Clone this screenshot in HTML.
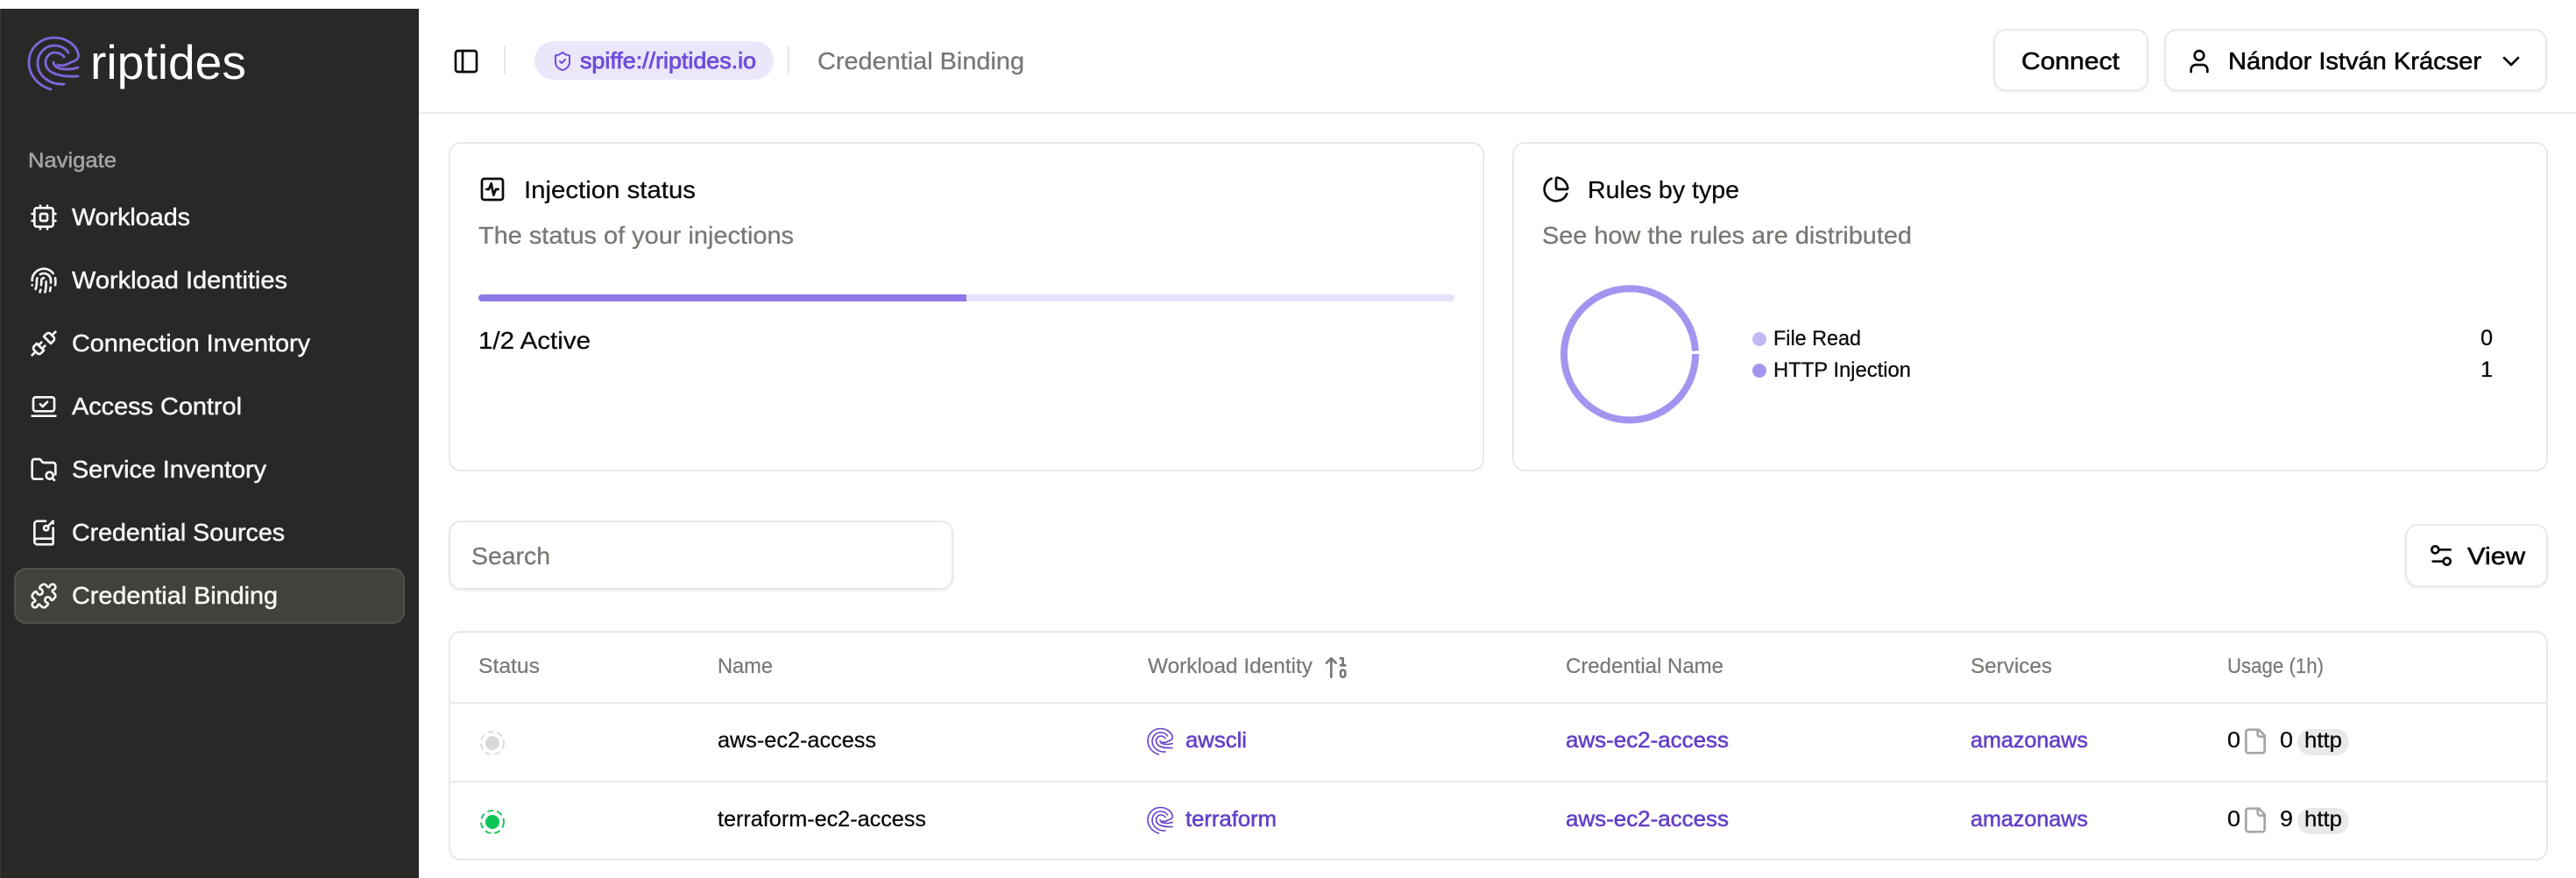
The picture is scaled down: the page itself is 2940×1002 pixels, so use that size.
<!DOCTYPE html>
<html lang="en">
<head>
<meta charset="utf-8">
<title>Credential Binding - riptides</title>
<style>
html,body{margin:0;padding:0;width:2940px;height:1002px;overflow:hidden;background:#fff}
body{position:relative;font-family:"Liberation Sans",sans-serif}
.box{position:absolute;box-sizing:border-box;background:#fff;border:2px solid #e8e8e7;border-radius:14px}
.btn{box-shadow:0 2px 3px rgba(0,0,0,.06)}
.side{position:absolute;left:0;top:10px;width:478px;height:992px;background:#292827;box-sizing:border-box;border-left:1px solid #3a3938}
.active{position:absolute;left:16px;top:648px;width:446px;height:64px;box-sizing:border-box;background:#42413c;border:2px solid #53514c;border-radius:14px}
.hline{position:absolute;height:2px;background:#e8e8e7}
.pill{position:absolute;background:#e9e9e7;border-radius:15px}
#o{position:absolute;left:0;top:0}
text{font-family:"Liberation Sans",sans-serif;white-space:pre}
.nav{font-size:28px;fill:#f6f6f4;stroke:#f6f6f4;stroke-width:.5px}
.ic{fill:none;stroke-width:2;stroke-linecap:round;stroke-linejoin:round}
.d{font-size:28px;fill:#0a0a0a;stroke:#0a0a0a;stroke-width:.25px}
.m{font-size:28px;fill:#0a0a0a;stroke:#0a0a0a;stroke-width:.6px}
.g{font-size:28px;fill:#7a7873;stroke:#7a7873;stroke-width:.3px}
.h{font-size:24px;fill:#7a7873;stroke:#7a7873;stroke-width:.2px}
.c{font-size:25px;fill:#0a0a0a;stroke:#0a0a0a;stroke-width:.25px}
.l{font-size:25px;fill:#6440c8;stroke:#6440c8;stroke-width:.55px}
</style>
</head>
<body>
<div class="side"></div>
<div class="active"></div>
<div class="hline" style="left:478px;top:128px;width:2462px"></div>
<div class="box btn" style="left:2275px;top:33px;width:177px;height:71px"></div>
<div class="box btn" style="left:2470px;top:33px;width:437px;height:71px"></div>
<div class="box" style="left:512px;top:162px;width:1182px;height:376px"></div>
<div class="box" style="left:1726px;top:162px;width:1182px;height:376px"></div>
<div class="box btn" style="left:512px;top:594px;width:576px;height:79px"></div>
<div class="box btn" style="left:2745px;top:598px;width:163px;height:72px"></div>
<div class="box" style="left:512px;top:720px;width:2396px;height:262px"></div>
<div class="hline" style="left:513px;top:801px;width:2394px"></div>
<div class="hline" style="left:513px;top:891px;width:2394px"></div>
<div class="pill" style="left:2622px;top:832px;width:59px;height:30px"></div>
<div class="pill" style="left:2622px;top:922px;width:59px;height:30px"></div>

<svg id="o" width="2940" height="1002" viewBox="0 0 2940 1002" xmlns="http://www.w3.org/2000/svg">
<defs>
<g id="logo" fill="none" stroke-linecap="round" stroke-linejoin="round">
<path d="M25 60C9 55 0 43 0 29C0 13 13 1 29 1C44 1 56 11 56.500 22C56.500 27 50 28 46 30C42 32 39 34 33 32"/>
<path d="M40 54C23 55 10 44 10 30C10 18 19 10 29 10C36 10 42 13 45 18"/>
<path d="M56 45C39 46 19 43 19 29C19 23 24 18 29 18C34 18 38 20 40 23"/>
<path d="M56 35C47 38 39 37 35 36C31 35 28 32 28 29"/>
</g>
</defs>

<!-- brand -->
<use href="#logo" x="33" y="42" stroke="#7f65d9" stroke-width="2.800"/>
<text x="103" y="90" font-size="55" fill="#fff" textLength="178" lengthAdjust="spacingAndGlyphs">riptides</text>
<text x="32" y="191" font-size="24" fill="#a3a29e" stroke="#a3a29e" stroke-width=".55" textLength="101" lengthAdjust="spacingAndGlyphs">Navigate</text>

<!-- nav labels -->
<text class="nav" x="82" y="257" textLength="135" lengthAdjust="spacingAndGlyphs">Workloads</text>
<text class="nav" x="82" y="329" textLength="246" lengthAdjust="spacingAndGlyphs">Workload Identities</text>
<text class="nav" x="82" y="401" textLength="272" lengthAdjust="spacingAndGlyphs">Connection Inventory</text>
<text class="nav" x="82" y="473" textLength="194" lengthAdjust="spacingAndGlyphs">Access Control</text>
<text class="nav" x="82" y="545" textLength="222" lengthAdjust="spacingAndGlyphs">Service Inventory</text>
<text class="nav" x="82" y="617" textLength="243" lengthAdjust="spacingAndGlyphs">Credential Sources</text>
<text class="nav" x="82" y="689" textLength="235" lengthAdjust="spacingAndGlyphs">Credential Binding</text>

<!-- nav icons -->
<g class="ic" stroke="#f6f6f4">
<g transform="translate(34 232) scale(1.333)"><rect x="4" y="4" width="16" height="16" rx="2"/><rect x="9" y="9" width="6" height="6" rx="1"/><path d="M15 2v2M15 20v2M2 15h2M2 9h2M20 15h2M20 9h2M9 2v2M9 20v2"/></g>
<g transform="translate(34 304) scale(1.333)"><path d="M12 10a2 2 0 0 0-2 2c0 1.020-.1 2.510-.26 4"/><path d="M14 13.120c0 2.380 0 6.380-1 8.880"/><path d="M17.290 21.020c.12-.6.43-2.300.5-3.020"/><path d="M2 12a10 10 0 0 1 18-6"/><path d="M2 16h.01"/><path d="M21.800 16c.2-2 .131-5.354 0-6"/><path d="M5 19.500C5.500 18 6 15 6 12a6 6 0 0 1 .34-2"/><path d="M8.650 22c.21-.66.45-1.320.57-2"/><path d="M9 6.800a6 6 0 0 1 9 5.200v2"/></g>
<g transform="translate(34 376) scale(1.333)"><path d="m19 5 3-3"/><path d="m2 22 3-3"/><path d="M6.300 20.300a2.400 2.400 0 0 0 3.400 0L12 18l-6-6-2.300 2.300a2.400 2.400 0 0 0 0 3.400Z"/><path d="M7.500 13.500 10 11"/><path d="M10.500 16.500 13 14"/><path d="m12 6 6 6 2.300-2.300a2.400 2.400 0 0 0 0-3.400l-2.600-2.600a2.400 2.400 0 0 0-3.400 0Z"/></g>
<g transform="translate(34 448) scale(1.333)"><path d="M2 20h20"/><path d="m9 10 2 2 4-4"/><rect x="3" y="4" width="18" height="12" rx="2"/></g>
<g transform="translate(34 520) scale(1.333)"><path d="M10.700 20H4a2 2 0 0 1-2-2V5a2 2 0 0 1 2-2h3.900a2 2 0 0 1 1.690.9l.81 1.200a2 2 0 0 0 1.670.9H20a2 2 0 0 1 2 2v8"/><circle cx="17" cy="17" r="3"/><path d="m21 21-1.900-1.900"/></g>
<g transform="translate(34 592) scale(1.333)"><path d="m19 3 1 1"/><path d="m20 2-4.500 4.500"/><path d="M20 7.898V21a1 1 0 0 1-1 1H6.500a1 1 0 0 1 0-5H20"/><path d="M4 19.500v-15A2.500 2.500 0 0 1 6.500 2h7"/><circle cx="14" cy="8" r="2"/></g>
<g transform="translate(34 664) scale(1.333)"><path d="M15.390 4.390a1 1 0 0 0 1.680-.474 2.500 2.500 0 1 1 3.014 3.015 1 1 0 0 0-.474 1.680l1.683 1.682a2.414 2.414 0 0 1 0 3.414L19.610 15.390a1 1 0 0 1-1.680-.474 2.500 2.500 0 1 0-3.014 3.015 1 1 0 0 1 .474 1.680l-1.683 1.682a2.414 2.414 0 0 1-3.414 0L8.610 19.610a1 1 0 0 0-1.680.474 2.500 2.500 0 1 1-3.014-3.015 1 1 0 0 0 .474-1.680l-1.683-1.682a2.414 2.414 0 0 1 0-3.414L4.390 8.610a1 1 0 0 1 1.680.474 2.500 2.500 0 1 0 3.014-3.015 1 1 0 0 1-.474-1.680l1.683-1.682a2.414 2.414 0 0 1 3.414 0z"/></g>
</g>

<!-- header -->
<g class="ic" stroke="#0a0a0a" transform="translate(516 54) scale(1.333)"><rect width="18" height="18" x="3" y="3" rx="2"/><path d="M9 3v18"/></g>
<rect x="575" y="53" width="2" height="32" fill="#e6e6e5"/>
<rect x="610" y="47" width="273" height="44" rx="22" fill="#ebe7fb"/>
<g class="ic" stroke="#6f4edb" transform="translate(630 58)"><path d="M20 13c0 5-3.500 7.500-7.660 8.950a1 1 0 0 1-.67-.01C7.500 20.500 4 18 4 13V6a1 1 0 0 1 1-1c2 0 4.500-1.200 6.240-2.720a1.170 1.170 0 0 1 1.520 0C14.510 3.810 17 5 19 5a1 1 0 0 1 1 1z"/><path d="m9 12 2 2 4-4"/></g>
<text x="662" y="78" font-size="26" fill="#6f4edb" stroke="#6f4edb" stroke-width=".85" textLength="201" lengthAdjust="spacingAndGlyphs">spiffe://riptides.io</text>
<rect x="899" y="53" width="2" height="32" fill="#e6e6e5"/>
<text class="g" x="933" y="79" textLength="236" lengthAdjust="spacingAndGlyphs">Credential Binding</text>
<text class="m" x="2307" y="79" textLength="112" lengthAdjust="spacingAndGlyphs">Connect</text>
<g class="ic" stroke="#0a0a0a" transform="translate(2494 54) scale(1.333)"><path d="M19 21v-2a4 4 0 0 0-4-4H9a4 4 0 0 0-4 4v2"/><circle cx="12" cy="7" r="4"/></g>
<text class="m" x="2543" y="79" textLength="289" lengthAdjust="spacingAndGlyphs">Nándor István Krácser</text>
<g class="ic" stroke="#0a0a0a" transform="translate(2850 54) scale(1.333)"><path d="m6 9 6 6 6-6"/></g>

<!-- injection card -->
<g class="ic" stroke="#0a0a0a" transform="translate(546 200) scale(1.333)"><rect width="18" height="18" x="3" y="3" rx="2"/><path d="M17 12h-2l-2 5-2-10-2 5H7"/></g>
<text class="d" x="598" y="226" textLength="196" lengthAdjust="spacingAndGlyphs">Injection status</text>
<text class="g" x="546" y="278" textLength="360" lengthAdjust="spacingAndGlyphs">The status of your injections</text>
<rect x="546" y="336" width="1114" height="8" rx="4" fill="#e7e2fb"/>
<path d="M550 336H1103V344H550a4 4 0 0 1 0-8Z" fill="#8e78e8"/>
<text class="d" x="546" y="398" textLength="128" lengthAdjust="spacingAndGlyphs">1/2 Active</text>

<!-- rules card -->
<g class="ic" stroke="#0a0a0a" transform="translate(1760 200) scale(1.333)"><path d="M21 12c.552 0 1.005-.449.95-.998a10 10 0 0 0-8.953-8.951c-.55-.055-.998.398-.998.95v8a1 1 0 0 0 1 1z"/><path d="M21.210 15.890A10 10 0 1 1 8 2.830"/></g>
<text class="d" x="1812" y="226" textLength="173" lengthAdjust="spacingAndGlyphs">Rules by type</text>
<text class="g" x="1760" y="278" textLength="422" lengthAdjust="spacingAndGlyphs">See how the rules are distributed</text>
<path d="M1935 404A75 75 0 1 1 1934.900 400.500" fill="none" stroke="#a594ef" stroke-width="8"/>
<circle cx="2008" cy="387" r="8" fill="#c4b8f4"/>
<circle cx="2008" cy="423" r="8" fill="#a594ef"/>
<text x="2024" y="394" font-size="24" fill="#0a0a0a" stroke="#0a0a0a" stroke-width=".25" textLength="100" lengthAdjust="spacingAndGlyphs">File Read</text>
<text x="2024" y="430" font-size="24" fill="#0a0a0a" stroke="#0a0a0a" stroke-width=".25" textLength="157" lengthAdjust="spacingAndGlyphs">HTTP Injection</text>
<text x="2845" y="394" font-size="25" fill="#0a0a0a" stroke="#0a0a0a" stroke-width=".3" text-anchor="end">0</text>
<text x="2845" y="430" font-size="25" fill="#0a0a0a" stroke="#0a0a0a" stroke-width=".3" text-anchor="end">1</text>

<!-- toolbar -->
<text class="g" x="538" y="644" textLength="90" lengthAdjust="spacingAndGlyphs">Search</text>
<g class="ic" stroke="#0a0a0a" transform="translate(2770 618) scale(1.333)"><path d="M20 7h-9"/><path d="M14 17H5"/><circle cx="17" cy="17" r="3"/><circle cx="7" cy="7" r="3"/></g>
<text class="m" x="2816" y="644" textLength="66" lengthAdjust="spacingAndGlyphs">View</text>

<!-- table header -->
<text class="h" x="546" y="768" textLength="70" lengthAdjust="spacingAndGlyphs">Status</text>
<text class="h" x="819" y="768" textLength="63" lengthAdjust="spacingAndGlyphs">Name</text>
<text class="h" x="1310" y="768" textLength="188" lengthAdjust="spacingAndGlyphs">Workload Identity</text>
<g class="ic" stroke="#7a7873" transform="translate(1510 746) scale(1.333)"><path d="m3 8 4-4 4 4"/><path d="M7 4v16"/><path d="M17 10V4h-2"/><path d="M15 10h4"/><rect x="15" y="14" width="4" height="6" ry="2"/></g>
<text class="h" x="1787" y="768" textLength="180" lengthAdjust="spacingAndGlyphs">Credential Name</text>
<text class="h" x="2249" y="768" textLength="93" lengthAdjust="spacingAndGlyphs">Services</text>
<text class="h" x="2542" y="768" textLength="110" lengthAdjust="spacingAndGlyphs">Usage (1h)</text>

<!-- row 1 -->
<circle cx="562" cy="848" r="13" fill="none" stroke="#d9d9d8" stroke-width="1.800" stroke-dasharray="7 4"/>
<circle cx="562" cy="848" r="8" fill="#d9d9d8"/>
<text class="c" x="819" y="853" textLength="181" lengthAdjust="spacingAndGlyphs">aws-ec2-access</text>
<use href="#logo" transform="translate(1310 831) scale(.5)" stroke="#6440c8" stroke-width="3.200"/>
<text class="l" x="1353" y="853" textLength="70" lengthAdjust="spacingAndGlyphs">awscli</text>
<text class="l" x="1787" y="853" textLength="186" lengthAdjust="spacingAndGlyphs">aws-ec2-access</text>
<text class="l" x="2249" y="853" textLength="134" lengthAdjust="spacingAndGlyphs">amazonaws</text>
<text class="c" x="2542" y="853" textLength="15" lengthAdjust="spacingAndGlyphs">0</text>
<g class="ic" stroke="#a6a6a4" transform="translate(2558 830) scale(1.333)"><path d="M15 2H6a2 2 0 0 0-2 2v16a2 2 0 0 0 2 2h12a2 2 0 0 0 2-2V7Z"/><path d="M14 2v4a2 2 0 0 0 2 2h4"/></g>
<text class="c" x="2602" y="853" textLength="15" lengthAdjust="spacingAndGlyphs">0</text>
<text class="c" x="2630" y="853" textLength="43" lengthAdjust="spacingAndGlyphs">http</text>

<!-- row 2 -->
<circle cx="562" cy="938" r="13" fill="none" stroke="#0cc456" stroke-width="1.800" stroke-dasharray="7 4"/>
<circle cx="562" cy="938" r="8" fill="#0cc456"/>
<text class="c" x="819" y="943" textLength="238" lengthAdjust="spacingAndGlyphs">terraform-ec2-access</text>
<use href="#logo" transform="translate(1310 921) scale(.5)" stroke="#6440c8" stroke-width="3.200"/>
<text class="l" x="1353" y="943" textLength="104" lengthAdjust="spacingAndGlyphs">terraform</text>
<text class="l" x="1787" y="943" textLength="186" lengthAdjust="spacingAndGlyphs">aws-ec2-access</text>
<text class="l" x="2249" y="943" textLength="134" lengthAdjust="spacingAndGlyphs">amazonaws</text>
<text class="c" x="2542" y="943" textLength="15" lengthAdjust="spacingAndGlyphs">0</text>
<g class="ic" stroke="#a6a6a4" transform="translate(2558 920) scale(1.333)"><path d="M15 2H6a2 2 0 0 0-2 2v16a2 2 0 0 0 2 2h12a2 2 0 0 0 2-2V7Z"/><path d="M14 2v4a2 2 0 0 0 2 2h4"/></g>
<text class="c" x="2602" y="943" textLength="15" lengthAdjust="spacingAndGlyphs">9</text>
<text class="c" x="2630" y="943" textLength="43" lengthAdjust="spacingAndGlyphs">http</text>
</svg>
</body>
</html>
